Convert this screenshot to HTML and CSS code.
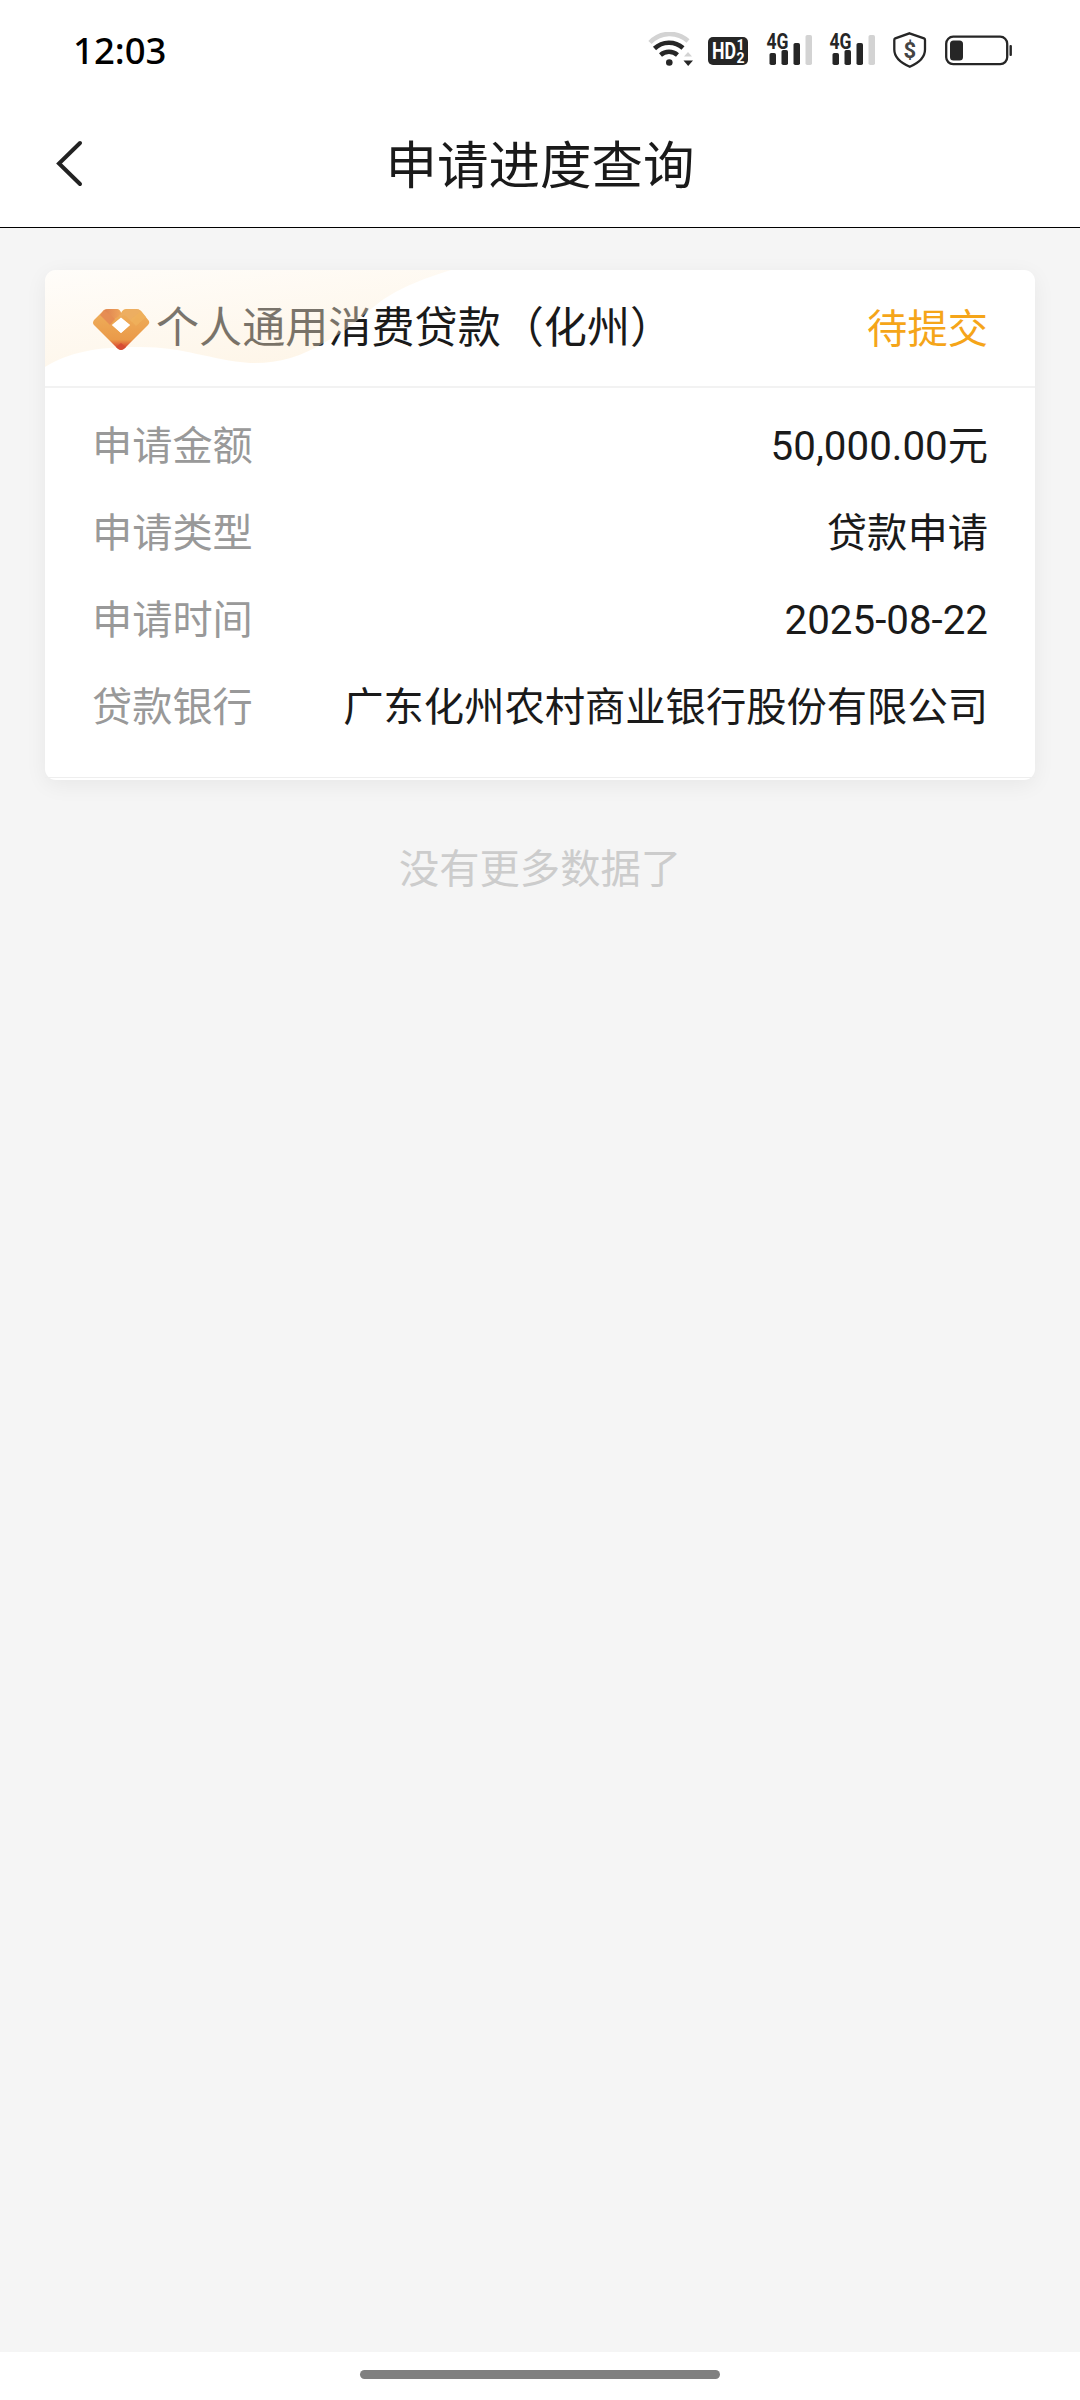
FILE: index.html
```html
<!DOCTYPE html>
<html lang="zh-CN">
<head>
<meta charset="utf-8">
<title>申请进度查询</title>
<link rel="stylesheet" href="styles.css">
</head>
<body>
<div class="screen">
  <div class="status-bar">
    <span class="clock">12:03</span>
    <div class="status-icons">
      <svg class="icon-wifi" width="46" height="36" viewBox="0 0 46 36" fill="none">
        <path d="M2 10.500A27 27 0 0 1 40 9" stroke="#d3d3d3" stroke-width="4.500"/>
        <path d="M6.500 16.500A21 21 0 0 1 35 16" stroke="#262626" stroke-width="4.500"/>
        <path d="M12.500 23A13 13 0 0 1 29.500 23" stroke="#262626" stroke-width="4.500"/>
        <circle cx="21.300" cy="30.500" r="3.300" fill="#262626"/>
        <path d="M36 24.500L40 20l4 4.500z" fill="#d3d3d3"/>
        <path d="M35.500 28.500h9.500L40.200 34z" fill="#262626"/>
      </svg>
      <svg class="icon-hd" width="40" height="36" viewBox="0 0 40 36">
        <rect y="5" width="40" height="28" rx="5" fill="#262626"/>
        <text class="hd-text" x="4" y="27" textLength="24" lengthAdjust="spacingAndGlyphs">HD</text>
        <text class="hd-digit" x="28.500" y="18">1</text>
        <text class="hd-digit" x="28.500" y="30.500">2</text>
      </svg>
      <svg class="icon-signal" width="46" height="40" viewBox="0 -4 46 40">
        <rect x="3.500" y="21" width="6.500" height="12" rx="1.800" fill="#262626"/>
        <rect x="15.500" y="18" width="6.500" height="15" rx="1.800" fill="#262626"/>
        <rect x="27.500" y="11" width="6.500" height="22" rx="1.800" fill="#262626"/>
        <rect x="39.500" y="3" width="6.500" height="30" rx="1.800" fill="#d3d3d3"/>
        <text class="net-text" x="0.500" y="16.500" textLength="22" lengthAdjust="spacingAndGlyphs">4G</text>
      </svg>
      <svg class="icon-signal" width="46" height="40" viewBox="0 -4 46 40">
        <rect x="3.500" y="21" width="6.500" height="12" rx="1.800" fill="#262626"/>
        <rect x="15.500" y="18" width="6.500" height="15" rx="1.800" fill="#262626"/>
        <rect x="27.500" y="11" width="6.500" height="22" rx="1.800" fill="#262626"/>
        <rect x="39.500" y="3" width="6.500" height="30" rx="1.800" fill="#d3d3d3"/>
        <text class="net-text" x="0.500" y="16.500" textLength="22" lengthAdjust="spacingAndGlyphs">4G</text>
      </svg>
      <svg class="icon-shield" width="34" height="36" viewBox="0 0 34 36">
        <path d="M16.500 1.300L31 6.300Q32 6.800 32 8v9.500c0 8-6.500 13.500-15.200 17.200C8 31 1.300 25.500 1.300 17.500V8q0-1.200 1-1.700z" fill="none" stroke="#262626" stroke-width="2.300"/>
        <text class="shield-text" x="16.800" y="26">$</text>
      </svg>
      <svg class="icon-battery" width="68" height="36" viewBox="0 0 68 36">
        <rect x="1.200" y="4.700" width="61" height="27.500" rx="7" fill="none" stroke="#262626" stroke-width="2.300"/>
        <rect x="5" y="8.500" width="13" height="20" rx="3.500" fill="#262626"/>
        <rect x="64.500" y="13" width="2.400" height="11" rx="1" fill="#262626"/>
      </svg>
    </div>
  </div>

  <header class="nav">
    <svg class="back" width="28" height="48" viewBox="0 0 28 48"><path d="M25 3L4 23.500L25 44" fill="none" stroke="#222" stroke-width="4" stroke-linecap="round"/></svg>
    <h1 class="nav-title">申请进度查询</h1>
    <span class="nav-side"></span>
  </header>

  <main class="content">
    <section class="card">
      <div class="card-head">
        <svg class="wave" width="420" height="100" viewBox="0 0 420 100">
          <defs><linearGradient id="cream" x1="0" y1="0" x2=".55" y2="1">
            <stop offset="0" stop-color="#fffaf2"/><stop offset="1" stop-color="#fce8c9"/>
          </linearGradient></defs>
          <path d="M0 0H406C367 12 346 23 331 35C309 53 300 62 282 71C255 88 230 94 205 93C165 90 140 77 95 77C50 77 25 82 0 97Z" fill="url(#cream)" fill-opacity=".42"/>
        </svg>
        <svg class="logo" width="58" height="44" viewBox="0 0 58 44">
          <defs>
            <linearGradient id="body" x1="0" y1="0" x2="0" y2="1"><stop offset="0" stop-color="#efb05c"/><stop offset=".75" stop-color="#ea9a49"/><stop offset=".88" stop-color="#df6038"/><stop offset="1" stop-color="#d94d32"/></linearGradient>
            <linearGradient id="fold" x1="0" y1="0" x2="1" y2="0"><stop offset="0" stop-color="#de8150"/><stop offset="1" stop-color="#efa45a"/></linearGradient>
          </defs>
          <path d="M12 2Q14 1 17 1H25Q28 1 29 5Q31 1 34 1H44Q47 1 49 3L57 13Q58 15 56 17L33 40Q29 44 25 40L2 17Q0 15 2 12ZM29 10L20 17L29 25L38 17Z" fill="url(#body)" fill-rule="evenodd"/>
          <path d="M20 17L29 9.500L38 17L29 25Z" fill="#fff"/>
          <path d="M12 2Q14 1 17 1H24Q27 1 29 5L27 8L19 13Z" fill="url(#fold)"/>
          <path d="M27 8L34 2Q36 1 38 1H44Q47 1 49 3L40 14L34 8Q31 6 29 9Z" fill="#edae61"/>
          <path d="M12 2L8 7L18 17L23 11Z" fill="#e68d53"/>
          <path d="M49 3L38 12L44 18L54 9Z" fill="#efb25c" fill-opacity=".75"/>
          <path d="M24 39L29 35L34 39Q29 45 24 39Z" fill="#d64d35"/>
        </svg>
        <span class="card-title">个人通用消费贷款（化州）</span>
        <span class="status">待提交</span>
      </div>
      <dl class="rows">
        <div class="row"><dt>申请金额</dt><dd>50,000.00元</dd></div>
        <div class="row"><dt>申请类型</dt><dd>贷款申请</dd></div>
        <div class="row"><dt>申请时间</dt><dd>2025-08-22</dd></div>
        <div class="row"><dt>贷款银行</dt><dd>广东化州农村商业银行股份有限公司</dd></div>
      </dl>
    </section>
    <p class="no-more">没有更多数据了</p>
  </main>

  <footer class="gesture"><span class="handle"></span></footer>
</div>
</body>
</html>
```
FILE: styles.css
```css
* { box-sizing: border-box; margin: 0; padding: 0; }
body { font-family: Roboto, "Noto Sans CJK SC", sans-serif; color: #1a1a1a; background: #f5f5f5; }
svg { display: block; flex: none; }
.screen { display: flex; flex-direction: column; width: 1080px; height: 2400px; overflow: hidden; }

.status-bar { display: flex; justify-content: space-between; align-items: center; height: 100px; padding: 0 67px 0 73px; background: #fff; }
.clock { font: 500 36.5px/48px "Noto Sans", sans-serif; color: #000; }
.status-icons { display: flex; align-items: flex-end; padding-bottom: 4px; }
.icon-hd { margin-left: 14px; }
.icon-signal { margin-left: 18px; }
.icon-signal + .icon-signal { margin-left: 17px; }
.icon-shield { margin-left: 18px; }
.icon-battery { margin-left: 18px; }
.hd-text { font: 700 23px Roboto, sans-serif; fill: #fff; }
.hd-digit { font: 700 14px Roboto, sans-serif; fill: #fff; }
.net-text { font: 700 22.5px Roboto, sans-serif; fill: #262626; stroke: #fff; stroke-width: 2px; paint-order: stroke; }
.shield-text { font: 700 22px Roboto, sans-serif; fill: #444; text-anchor: middle; }

.nav { display: flex; justify-content: space-between; align-items: center; height: 128px; padding: 0 55px; border-bottom: 1px solid #000; background: #fff; }
.nav-title { padding-top: 6px; font-size: 51.5px; font-weight: 400; line-height: 76px; }
.nav-side { width: 28px; }

.content { flex: 1; padding: 42px 45px 0; }
.card { height: 510px; border-radius: 11px; background: #fff; box-shadow: 0 5px 22px rgba(0, 0, 0, .06); }
.card-head { position: relative; display: flex; align-items: center; height: 118px; padding: 0 47px 0 48px; border-bottom: 2px solid #f2f2f2; }
.wave { position: absolute; top: 0; left: 0; border-top-left-radius: 11px; }
.logo { position: relative; margin-top: 4px; margin-left: -1px; }
.card-title { flex: 1; margin-left: 6px; padding-top: 2px; font-size: 43.1px; line-height: 64px; }
.status { padding-top: 4px; font-size: 40.3px; line-height: 60px; color: #f5a519; }
.rows { height: 390px; padding: 15px 47px 0; border-bottom: 1px solid #eee; }
.row { display: flex; justify-content: space-between; align-items: center; height: 87px; font-size: 40.3px; line-height: 60px; }
.row dt { color: #999; font-size: 40.2px; }
.no-more { margin-top: 60px; font-size: 40.3px; line-height: 60px; text-align: center; color: #ccc; }

.gesture { display: flex; justify-content: center; height: 48px; padding-top: 18px; background: #fff; }
.handle { width: 360px; height: 9px; border-radius: 5px; background: #808080; }
```
